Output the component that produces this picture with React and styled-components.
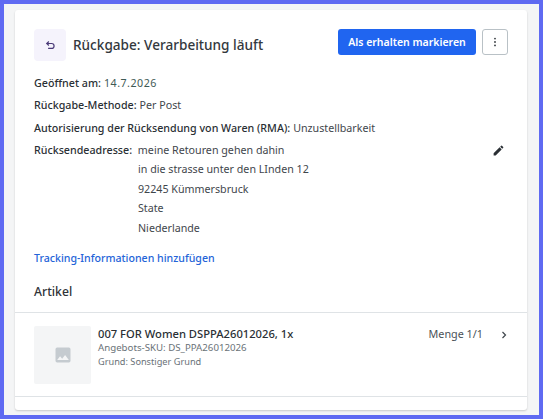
import React from 'react';
import styled, { createGlobalStyle } from 'styled-components';

const GlobalStyle = createGlobalStyle`
    html, body { margin: 0; padding: 0; }
    body {
        font-family: "Noto Sans", "Open Sans", sans-serif;
        color: #2f3338;
    }
`;

const Frame = styled.div`
    box-sizing: border-box;
    width: 543px;
    height: 419px;
    border: 4px solid #5f6af2;
    background: #f4f5f6;
    padding: 6px 12px 5px 11px;
`;

const Card = styled.section`
    height: 100%;
    box-sizing: border-box;
    background: #fff;
    border-radius: 3px;
    box-shadow: 0 1px 2px rgba(0, 0, 0, 0.18);
    padding-top: 19px;
`;

const Section = styled.div`
    padding: 0 19px;
`;

const Header = styled.header`
    display: flex;
    align-items: flex-start;
    margin-bottom: 13px;
`;

const IconBox = styled.div`
    width: 32px;
    height: 32px;
    border-radius: 4px;
    background: #f5f3fc;
    color: #4a3a78;
    display: flex;
    align-items: center;
    justify-content: center;
    margin-right: 7px;
`;

const Title = styled.h1`
    flex: 1;
    margin: 0;
    font-size: 13.6px;
    line-height: 32px;
    font-weight: 500;
    color: #33383d;
`;

const PrimaryButton = styled.button`
    width: 138px;
    height: 26px;
    border: 0;
    border-radius: 3px;
    background: #2065f0;
    color: #fff;
    font: 600 10.5px "Noto Sans", sans-serif;
    padding: 0;
`;

const KebabButton = styled.button`
    width: 26px;
    height: 26px;
    margin-left: 6px;
    border: 1px solid #b9c1c6;
    border-radius: 3px;
    background: #fff;
    color: #33383d;
    display: flex;
    align-items: center;
    justify-content: center;
    padding: 0;
`;

const Row = styled.div`
    display: flex;
    font-size: 10.7px;
    line-height: 19px;
    margin-bottom: ${p => p.$gap ?? 3}px;
    color: #3f464c;
`;

const Label = styled.span`
    font-weight: 500;
    color: #2a2f34;
    margin-right: 3px;
    white-space: nowrap;
`;

const DateValue = styled.span`
    letter-spacing: 0.5px;
    color: #3f5a55;
`;

const AddressRow = styled.div`
    font-size: 10.7px;
    color: #3f464c;
`;

const FirstLine = styled.div`
    display: flex;
    line-height: 19.4px;
    justify-content: space-between;
`;

const AddressLine = styled.div`
    line-height: 19.4px;
    margin-left: 104px;
`;

const EditIcon = styled.svg`
    width: 13px;
    height: 13px;
    margin-top: 3px;
    margin-right: 3px;
    fill: #2a2f34;
`;

const TrackingLink = styled.a`
    display: block;
    margin-top: 11px;
    font-size: 10.6px;
    line-height: 19px;
    font-weight: 500;
    color: #2464d8;
`;

const SectionTitle = styled.h2`
    margin: 14px 0 10px;
    font-size: 12.2px;
    line-height: 20px;
    font-weight: 500;
    color: #2f3338;
`;

const ItemRow = styled.div`
    display: flex;
    align-items: flex-start;
    padding: 13px 19px 12px;
    border-top: 1px solid #dfe3e6;
    border-bottom: 1px solid #dfe3e6;
`;

const Thumb = styled.div`
    width: 57px;
    height: 58px;
    background: #f4f5f6;
    border-radius: 2px;
    display: flex;
    align-items: center;
    justify-content: center;
    margin-right: 7px;
    flex-shrink: 0;
`;

const ItemInfo = styled.div`
    flex: 1;
    padding-top: 1px;
`;

const ItemName = styled.div`
    font-size: 11.2px;
    line-height: 14px;
    font-weight: 500;
    color: #2a2f34;
`;

const ItemMeta = styled.div`
    font-size: ${p => p.$size ?? 9.7}px;
    line-height: 13.5px;
    color: #6a7278;
`;

const Quantity = styled.div`
    font-size: 10.8px;
    line-height: 14px;
    color: #4a5157;
    margin-top: 1px;
    margin-right: 15px;
`;

const Chevron = styled.svg`
    width: 12px;
    height: 12px;
    margin-top: 3px;
    margin-right: -2px;
    fill: none;
    stroke: #3f464c;
    stroke-width: 1.2;
`;

const App = () => (
    <Frame>
        <GlobalStyle />
        <Card>
            <Section>
                <Header>
                    <IconBox>
                        <svg width="11" height="11" viewBox="0 0 12 12" fill="none" stroke="currentColor" strokeWidth="1.3">
                            <path d="M4.2 1.6 1.9 3.8l2.3 2.2" />
                            <path d="M2 3.8h5.2a2.6 2.6 0 0 1 0 5.4H3.4" />
                        </svg>
                    </IconBox>
                    <Title>Rückgabe: Verarbeitung läuft</Title>
                    <PrimaryButton>Als erhalten markieren</PrimaryButton>
                    <KebabButton aria-label="Mehr">
                        <svg width="12" height="12" viewBox="0 0 12 12" fill="currentColor">
                            <circle cx="6" cy="2.6" r="0.9" />
                            <circle cx="6" cy="6" r="0.9" />
                            <circle cx="6" cy="9.4" r="0.9" />
                        </svg>
                    </KebabButton>
                </Header>
                <Row><Label>Geöffnet am:</Label> <DateValue>14.7.2026</DateValue></Row>
                <Row $gap={4}><Label>Rückgabe-Methode:</Label> Per Post</Row>
                <Row><Label>Autorisierung der Rücksendung von Waren (RMA):</Label> Unzustellbarkeit</Row>
                <AddressRow>
                    <FirstLine>
                        <div><Label>Rücksendeadresse:</Label> meine Retouren gehen dahin</div>
                        <EditIcon viewBox="0 0 24 24">
                            <path d="M3 17.25V21h3.75L17.81 9.94l-3.75-3.75L3 17.25zM20.71 7.04a1 1 0 0 0 0-1.41l-2.34-2.34a1 1 0 0 0-1.41 0l-1.83 1.83 3.75 3.75 1.83-1.83z" />
                        </EditIcon>
                    </FirstLine>
                    <AddressLine>in die strasse unter den LInden 12</AddressLine>
                    <AddressLine>92245 Kümmersbruck</AddressLine>
                    <AddressLine>State</AddressLine>
                    <AddressLine>Niederlande</AddressLine>
                </AddressRow>
                <TrackingLink>Tracking-Informationen hinzufügen</TrackingLink>
                <SectionTitle>Artikel</SectionTitle>
            </Section>
            <ItemRow>
                <Thumb>
                    <svg width="20" height="20" viewBox="0 0 24 24" fill="#c5cbd0">
                        <path d="M21 19V5a2 2 0 0 0-2-2H5a2 2 0 0 0-2 2v14a2 2 0 0 0 2 2h14a2 2 0 0 0 2-2zM8.5 13.5l2.5 3 3.5-4.5 4.5 6H5l3.5-4.5z" />
                    </svg>
                </Thumb>
                <ItemInfo>
                    <ItemName>007 FOR Women DSPPA26012026, 1x</ItemName>
                    <ItemMeta>Angebots-SKU: DS_PPA26012026</ItemMeta>
                    <ItemMeta $size={9.2}>Grund: Sonstiger Grund</ItemMeta>
                </ItemInfo>
                <Quantity>Menge 1/1</Quantity>
                <Chevron viewBox="0 0 12 12"><path d="M4.5 3 7.5 6l-3 3" /></Chevron>
            </ItemRow>
        </Card>
    </Frame>
);

export default App;
